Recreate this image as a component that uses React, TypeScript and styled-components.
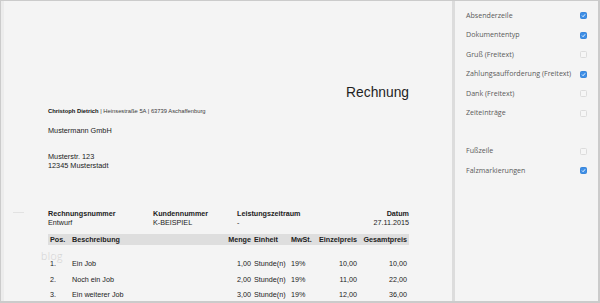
import React from "react";
import styled, { createGlobalStyle } from "styled-components";

const Global = createGlobalStyle`
  html, body { margin: 0; padding: 0; background: #ffffff; }
  * { box-sizing: border-box; }
`;

const Frame = styled.div`
  width: 600px;
  height: 303px;
  border: 1px solid #cbcbcb;
  border-bottom-width: 2px;
  border-right-width: 2px;
  display: flex;
  overflow: hidden;
  background: #f4f4f4;
`;

const Doc = styled.div`
  width: 451px;
  flex: none;
  position: relative;
  border-left: 3px solid #ececec;
  padding: 0 0 0 44px;
  font-family: "Liberation Sans", Arial, sans-serif;
  color: #222;
  display: flex;
  flex-direction: column;
`;

const Divider = styled.div`
  width: 3px;
  flex: none;
  background: #dcdcdc;
`;

const Panel = styled.div`
  flex: 1;
  padding: 4px 0 0 11px;
  font-family: "Open Sans", sans-serif;
  color: #5a5a5a;
  display: flex;
  flex-direction: column;
`;

const Content = styled.div`
  width: 361px;
  display: flex;
  flex-direction: column;
`;

const Title = styled.div`
  font-size: 13.8px;
  line-height: 16px;
  text-align: right;
  margin-top: 84px;
  color: #1e1e1e;
`;

const Sender = styled.div`
  font-size: 5.8px;
  line-height: 8px;
  margin-top: 6px;
  color: #3a3a3a;
  b { font-weight: bold; color: #111; }
`;

const Line = styled.div<{ $mt?: number }>`
  font-size: 7.3px;
  line-height: 9px;
  margin-top: ${(p) => p.$mt ?? 0}px;
`;

const MetaGrid = styled.div`
  display: grid;
  grid-template-columns: 105px 84px 1fr 80px;
  margin-top: 39px;
  font-size: 7.2px;
  line-height: 9px;
`;

const MetaLabel = styled.div<{ $right?: boolean }>`
  font-weight: bold;
  text-align: ${(p) => (p.$right ? "right" : "left")};
`;

const MetaValue = styled.div<{ $right?: boolean }>`
  text-align: ${(p) => (p.$right ? "right" : "left")};
`;

const cols = "22px 1fr 25px 40px 24px 42px 50px";

const TableHead = styled.div`
  margin-top: 7px;
  background: #dedede;
  height: 11px;
  display: grid;
  grid-template-columns: ${cols};
  align-items: center;
  font-size: 7.2px;
  font-weight: bold;
  padding: 0 2px;
`;

const Row = styled.div<{ $first?: boolean }>`
  display: grid;
  grid-template-columns: ${cols};
  align-items: center;
  font-size: 7.2px;
  height: 15.5px;
  padding: 0 2px;
  margin-top: ${(p) => (p.$first ? 11 : 0)}px;
`;

const Cell = styled.div<{ $right?: boolean; $pl?: number }>`
  text-align: ${(p) => (p.$right ? "right" : "left")};
  padding-left: ${(p) => p.$pl ?? 0}px;
  white-space: nowrap;
`;

const Watermark = styled.div`
  position: absolute;
  left: 37px;
  top: 248px;
  font-family: "Open Sans", sans-serif;
  font-weight: 300;
  font-size: 10.5px;
  color: #d2d2d2;
  letter-spacing: 0.4px;
`;

const FoldMark = styled.div`
  position: absolute;
  left: 9px;
  top: 211px;
  width: 11px;
  height: 1px;
  background: #e2e2e2;
`;

const Option = styled.div`
  display: flex;
  align-items: center;
  justify-content: space-between;
  height: 19.5px;
  padding-right: 11px;
  font-size: 7.1px;
`;

const Spacer = styled.div`
  height: 18.5px;
`;

const Box = styled.span<{ $on?: boolean }>`
  width: 7px;
  height: 7px;
  border-radius: 1.5px;
  margin-top: 2px;
  display: inline-flex;
  align-items: center;
  justify-content: center;
  background: ${(p) => (p.$on ? "#3d8ee6" : "#f6f6f6")};
  border: 1px solid ${(p) => (p.$on ? "#3a86da" : "#dcdcdc")};
`;

const Check = () => (
  <svg width="5" height="5" viewBox="0 0 10 10">
    <path d="M2 5.2 L4.2 7.4 L8.2 2.6" fill="none" stroke="#fff" strokeWidth="1.8" />
  </svg>
);

const options: { label: string; on: boolean; gapBefore?: boolean }[] = [
  { label: "Absenderzeile", on: true },
  { label: "Dokumententyp", on: true },
  { label: "Gruß (Freitext)", on: false },
  { label: "Zahlungsaufforderung (Freitext)", on: true },
  { label: "Dank (Freitext)", on: false },
  { label: "Zeiteinträge", on: false },
  { label: "Fußzeile", on: false, gapBefore: true },
  { label: "Falzmarkierungen", on: true },
];

const rows = [
  ["1.", "Ein Job", "1,00", "Stunde(n)", "19%", "10,00", "10,00"],
  ["2.", "Noch ein Job", "2,00", "Stunde(n)", "19%", "11,00", "22,00"],
  ["3.", "Ein weiterer Job", "3,00", "Stunde(n)", "19%", "12,00", "36,00"],
];

export default function App() {
  return (
    <>
      <Global />
      <Frame>
        <Doc>
          <FoldMark />
          <Watermark>blog</Watermark>
          <Content>
            <Title>Rechnung</Title>
            <Sender>
              <b>Christoph Dietrich</b> | Heinsestraße 5A | 63739 Aschaffenburg
            </Sender>
            <Line $mt={11}>Mustermann GmbH</Line>
            <Line $mt={17}>Musterstr. 123</Line>
            <Line>12345 Musterstadt</Line>
            <MetaGrid>
              <MetaLabel>Rechnungsnummer</MetaLabel>
              <MetaLabel>Kundennummer</MetaLabel>
              <MetaLabel>Leistungszeitraum</MetaLabel>
              <MetaLabel $right>Datum</MetaLabel>
              <MetaValue>Entwurf</MetaValue>
              <MetaValue>K-BEISPIEL</MetaValue>
              <MetaValue>-</MetaValue>
              <MetaValue $right>27.11.2015</MetaValue>
            </MetaGrid>
            <TableHead>
              <Cell>Pos.</Cell>
              <Cell>Beschreibung</Cell>
              <Cell $right>Menge</Cell>
              <Cell $pl={3}>Einheit</Cell>
              <Cell>MwSt.</Cell>
              <Cell $right>Einzelpreis</Cell>
              <Cell $right>Gesamtpreis</Cell>
            </TableHead>
            {rows.map((r, i) => (
              <Row key={i} $first={i === 0}>
                <Cell>{r[0]}</Cell>
                <Cell>{r[1]}</Cell>
                <Cell $right>{r[2]}</Cell>
                <Cell $pl={3}>{r[3]}</Cell>
                <Cell>{r[4]}</Cell>
                <Cell $right>{r[5]}</Cell>
                <Cell $right>{r[6]}</Cell>
              </Row>
            ))}
          </Content>
        </Doc>
        <Divider />
        <Panel>
          {options.map((o) => (
            <React.Fragment key={o.label}>
              {o.gapBefore && <Spacer />}
              <Option>
                <span>{o.label}</span>
                <Box $on={o.on}>{o.on && <Check />}</Box>
              </Option>
            </React.Fragment>
          ))}
        </Panel>
      </Frame>
    </>
  );
}
